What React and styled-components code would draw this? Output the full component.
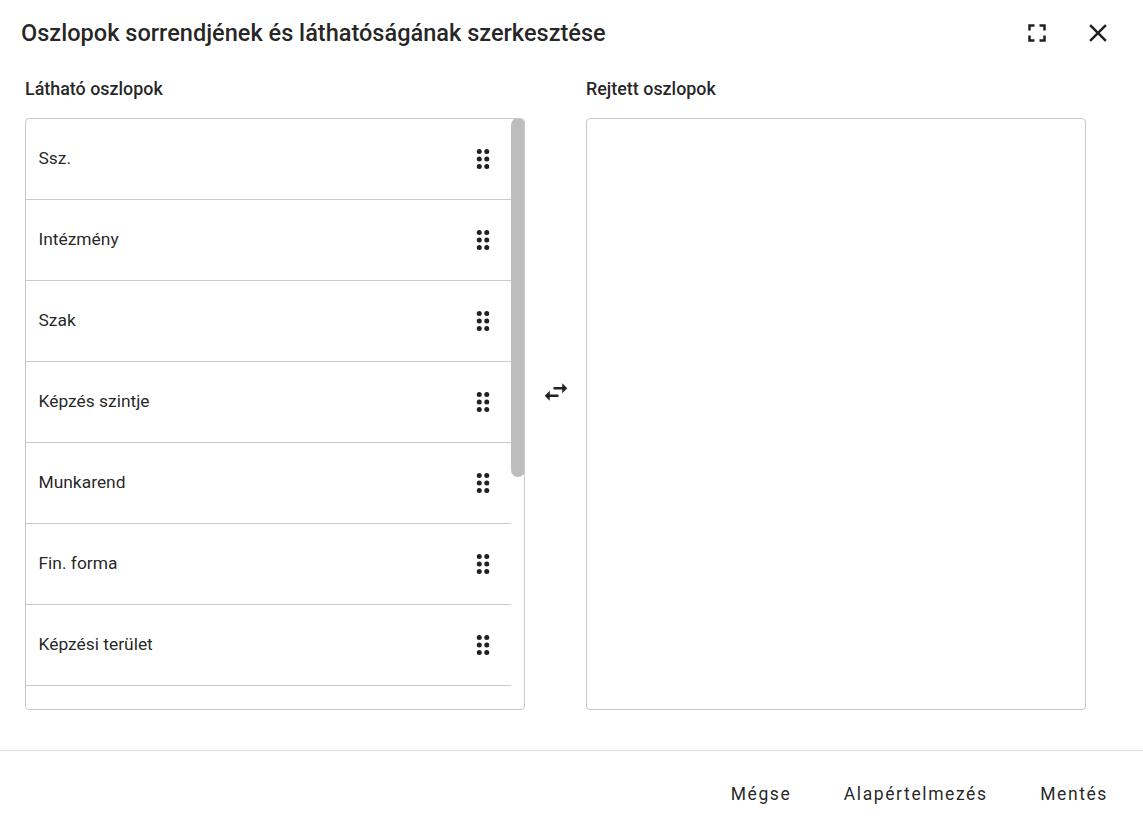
import React from "react";
import styled, { createGlobalStyle } from "styled-components";

const Global = createGlobalStyle`
  html, body { margin: 0; padding: 0; background: #fff; }
  body { font-family: Roboto, "Liberation Sans", sans-serif; color: rgba(0,0,0,.87); }
`;
const Dialog = styled.div`
  width: 1143px; height: 832px; display: flex; flex-direction: column; overflow: hidden;
`;
const Header = styled.header`
  height: 66px; display: flex; align-items: center; padding: 0 30.5px 0 21px; justify-content: space-between; box-sizing: border-box;
`;
const Title = styled.h1`
  margin: 0; font-size: 23.55px; font-weight: 500; line-height: 32px; letter-spacing: 0;
`;
const HeaderActions = styled.div`
  display: flex; gap: 30.5px;
`;
const IconButton = styled.button`
  width: 30px; height: 30px; padding: 0; border: 0; background: none; color: #212121; display: flex;
`;
const Columns = styled.div`
  height: 685px; padding: 0 0 0 25px; display: grid; grid-template-columns: 500px 61px 500px; box-sizing: border-box;
  border-bottom: 1px solid #e0e0e0;
`;
const Column = styled.section`
  display: flex; flex-direction: column;
`;
const ColumnLabel = styled.h2`
  margin: 0; height: 52px; font-size: 17.9px; font-weight: 500; line-height: 45px; box-sizing: border-box;
`;
const ListBox = styled.div`
  position: relative; height: 592px; box-sizing: border-box; border: 1px solid #c9c9c9; border-radius: 4px; overflow: hidden;
`;
const Thumb = styled.div`
  position: absolute; top: -1px; right: -1px; width: 14px; height: 359px; background: #bdbdbd; border-radius: 7px;
`;
const Row = styled.div`
  width: 485px; height: 81px; box-sizing: border-box; border-bottom: 1px solid #c9c9c9; padding: 0 13px 0 12.5px;
  display: flex; align-items: center; justify-content: space-between; font-size: 17.4px;
`;
const RowLabel = styled.span`
  margin-top: -2px;
`;
const DragIcon = styled.svg`
  width: 30px; height: 30px; color: #212121; fill: currentColor;
`;
const Middle = styled.div`
  display: flex; align-items: center; justify-content: center; padding-bottom: 32px; color: #212121;
`;
const Footer = styled.footer`
  flex: 1; display: flex; justify-content: flex-end; align-items: center; padding: 4px 35px 0 0; gap: 52.5px;
`;
const TextButton = styled.button`
  border: 0; background: none; padding: 0; font: 400 17.5px/24px Roboto, sans-serif; letter-spacing: 1.6px; color: rgba(0,0,0,.87);
`;

const Mdi = ({ d }) => (
  <svg width="30" height="30" viewBox="0 0 24 24" fill="currentColor"><path d={d} /></svg>
);
const Drag = () => (
  <DragIcon viewBox="0 0 24 24">
    {[6, 12, 18].map((y) => [9, 15].map((x) => <circle key={x + "-" + y} cx={x} cy={y} r="2" />))}
  </DragIcon>
);
const rows = ["Ssz.", "Intézmény", "Szak", "Képzés szintje", "Munkarend", "Fin. forma", "Képzési terület"];

export default function App() {
  return (
    <Dialog>
      <Global />
      <Header>
        <Title>Oszlopok sorrendjének és láthatóságának szerkesztése</Title>
        <HeaderActions>
          <IconButton><Mdi d="M5,5H10V7H7V10H5V5M14,5H19V10H17V7H14V5M17,14H19V19H14V17H17V14M10,17V19H5V14H7V17H10Z" /></IconButton>
          <IconButton><Mdi d="M19,6.41L17.59,5L12,10.59L6.41,5L5,6.41L10.59,12L5,17.59L6.41,19L12,13.41L17.59,19L19,17.59L13.41,12L19,6.41Z" /></IconButton>
        </HeaderActions>
      </Header>
      <Columns>
        <Column>
          <ColumnLabel>Látható oszlopok</ColumnLabel>
          <ListBox>
            {rows.map((r) => (
              <Row key={r}><RowLabel>{r}</RowLabel><Drag /></Row>
            ))}
            <Thumb />
          </ListBox>
        </Column>
        <Middle>
          <Mdi d="M21,9L17,5V8H10V10H17V13M7,11L3,15L7,19V16H14V14H7V11Z" />
        </Middle>
        <Column>
          <ColumnLabel>Rejtett oszlopok</ColumnLabel>
          <ListBox />
        </Column>
      </Columns>
      <Footer>
        <TextButton>Mégse</TextButton>
        <TextButton>Alapértelmezés</TextButton>
        <TextButton>Mentés</TextButton>
      </Footer>
    </Dialog>
  );
}
